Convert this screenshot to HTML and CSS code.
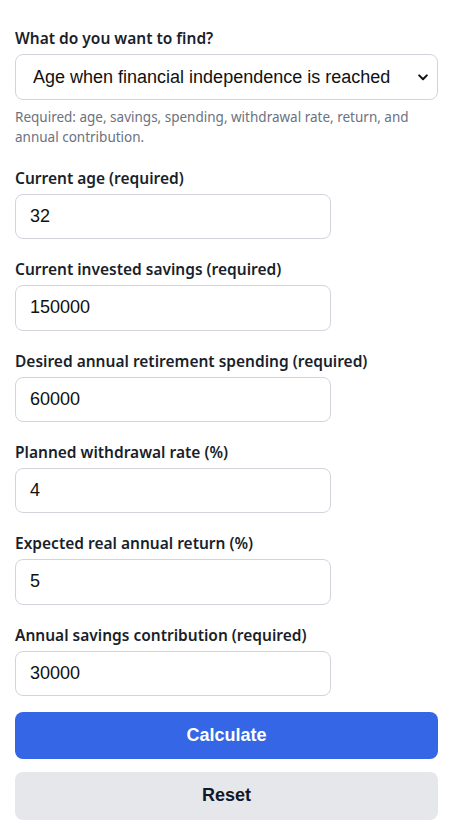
FILE: index.html
```html
<!DOCTYPE html>
<html lang="en">
<head>
<meta charset="utf-8">
<title>FI Calculator</title>
<link rel="stylesheet" href="styles.css">
</head>
<body>
<form class="calc">
  <div class="field top">
    <label class="label" for="mode">What do you want to find?</label>
    <div class="select-wrap">
      <select id="mode" class="select">
        <option>Age when financial independence is reached</option>
      </select>
      <svg class="chev" width="10" height="7" viewBox="0 0 10 7"><path d="M1.2 1.4 L5 5.2 L8.8 1.4" fill="none" stroke="#111" stroke-width="2" stroke-linecap="round" stroke-linejoin="round"/></svg>
    </div>
    <p class="help">Required: age, savings, spending, withdrawal rate, return, and annual contribution.</p>
  </div>
  <div class="field">
    <label class="label" for="age">Current age (required)</label>
    <input id="age" class="input" type="text" value="32">
  </div>
  <div class="field">
    <label class="label" for="sav">Current invested savings (required)</label>
    <input id="sav" class="input" type="text" value="150000">
  </div>
  <div class="field">
    <label class="label" for="spend">Desired annual retirement spending (required)</label>
    <input id="spend" class="input" type="text" value="60000">
  </div>
  <div class="field">
    <label class="label" for="wr">Planned withdrawal rate (%)</label>
    <input id="wr" class="input" type="text" value="4">
  </div>
  <div class="field">
    <label class="label" for="ret">Expected real annual return (%)</label>
    <input id="ret" class="input" type="text" value="5">
  </div>
  <div class="field last">
    <label class="label" for="contrib">Annual savings contribution (required)</label>
    <input id="contrib" class="input" type="text" value="30000">
  </div>
  <div class="actions">
    <button type="button" class="btn primary">Calculate</button>
    <button type="button" class="btn secondary">Reset</button>
  </div>
</form>
</body>
</html>
```

FILE: styles.css
```css
* { box-sizing: border-box; }
html, body { margin: 0; padding: 0; background: #fff; }
body {
  font-family: "Noto Sans", "Open Sans", sans-serif;
  color: #1f2937;
}
.calc {
  width: 423px;
  margin: 26px 0 0 15px;
  display: flex;
  flex-direction: column;
}
.field {
  display: flex;
  flex-direction: column;
  margin-bottom: 18px;
}
.field.top { margin-bottom: 19px; }
.field.last { margin-bottom: 16px; }
.label {
  font-size: 15.5px;
  font-weight: 600;
  line-height: 24px;
  margin-bottom: 4px;
  color: #1a1f2b;
}
.select-wrap { position: relative; }
.select {
  appearance: none;
  -webkit-appearance: none;
  width: 100%;
  height: 46px;
  border: 1px solid #d1d5db;
  border-radius: 8px;
  background: #fff;
  font-family: "Liberation Sans", Arial, sans-serif;
  font-size: 18px;
  color: #111;
  padding: 0 30px 0 17px;
  margin: 0;
}
.chev {
  position: absolute;
  right: 10px;
  top: 20px;
}
.help {
  margin: 7px 0 0;
  font-size: 13.5px;
  line-height: 20px;
  color: #6b7280;
}
.input {
  width: 316px;
  height: 45.33px;
  border: 1px solid #d1d5db;
  border-radius: 8px;
  background: #fff;
  font-family: "Liberation Sans", Arial, sans-serif;
  font-size: 18px;
  color: #111;
  padding: 0 14px;
  margin: 0;
}
.actions {
  display: flex;
  flex-direction: column;
  gap: 12.5px;
}
.btn {
  width: 100%;
  border: 0;
  border-radius: 8px;
  font-family: "Liberation Sans", Arial, sans-serif;
  font-size: 18px;
  font-weight: 700;
  margin: 0;
  padding: 0;
}
.primary {
  height: 47.5px;
  background: #3566e5;
  color: #fff;
}
.secondary {
  height: 48px;
  background: #e5e7eb;
  color: #111827;
}
```
